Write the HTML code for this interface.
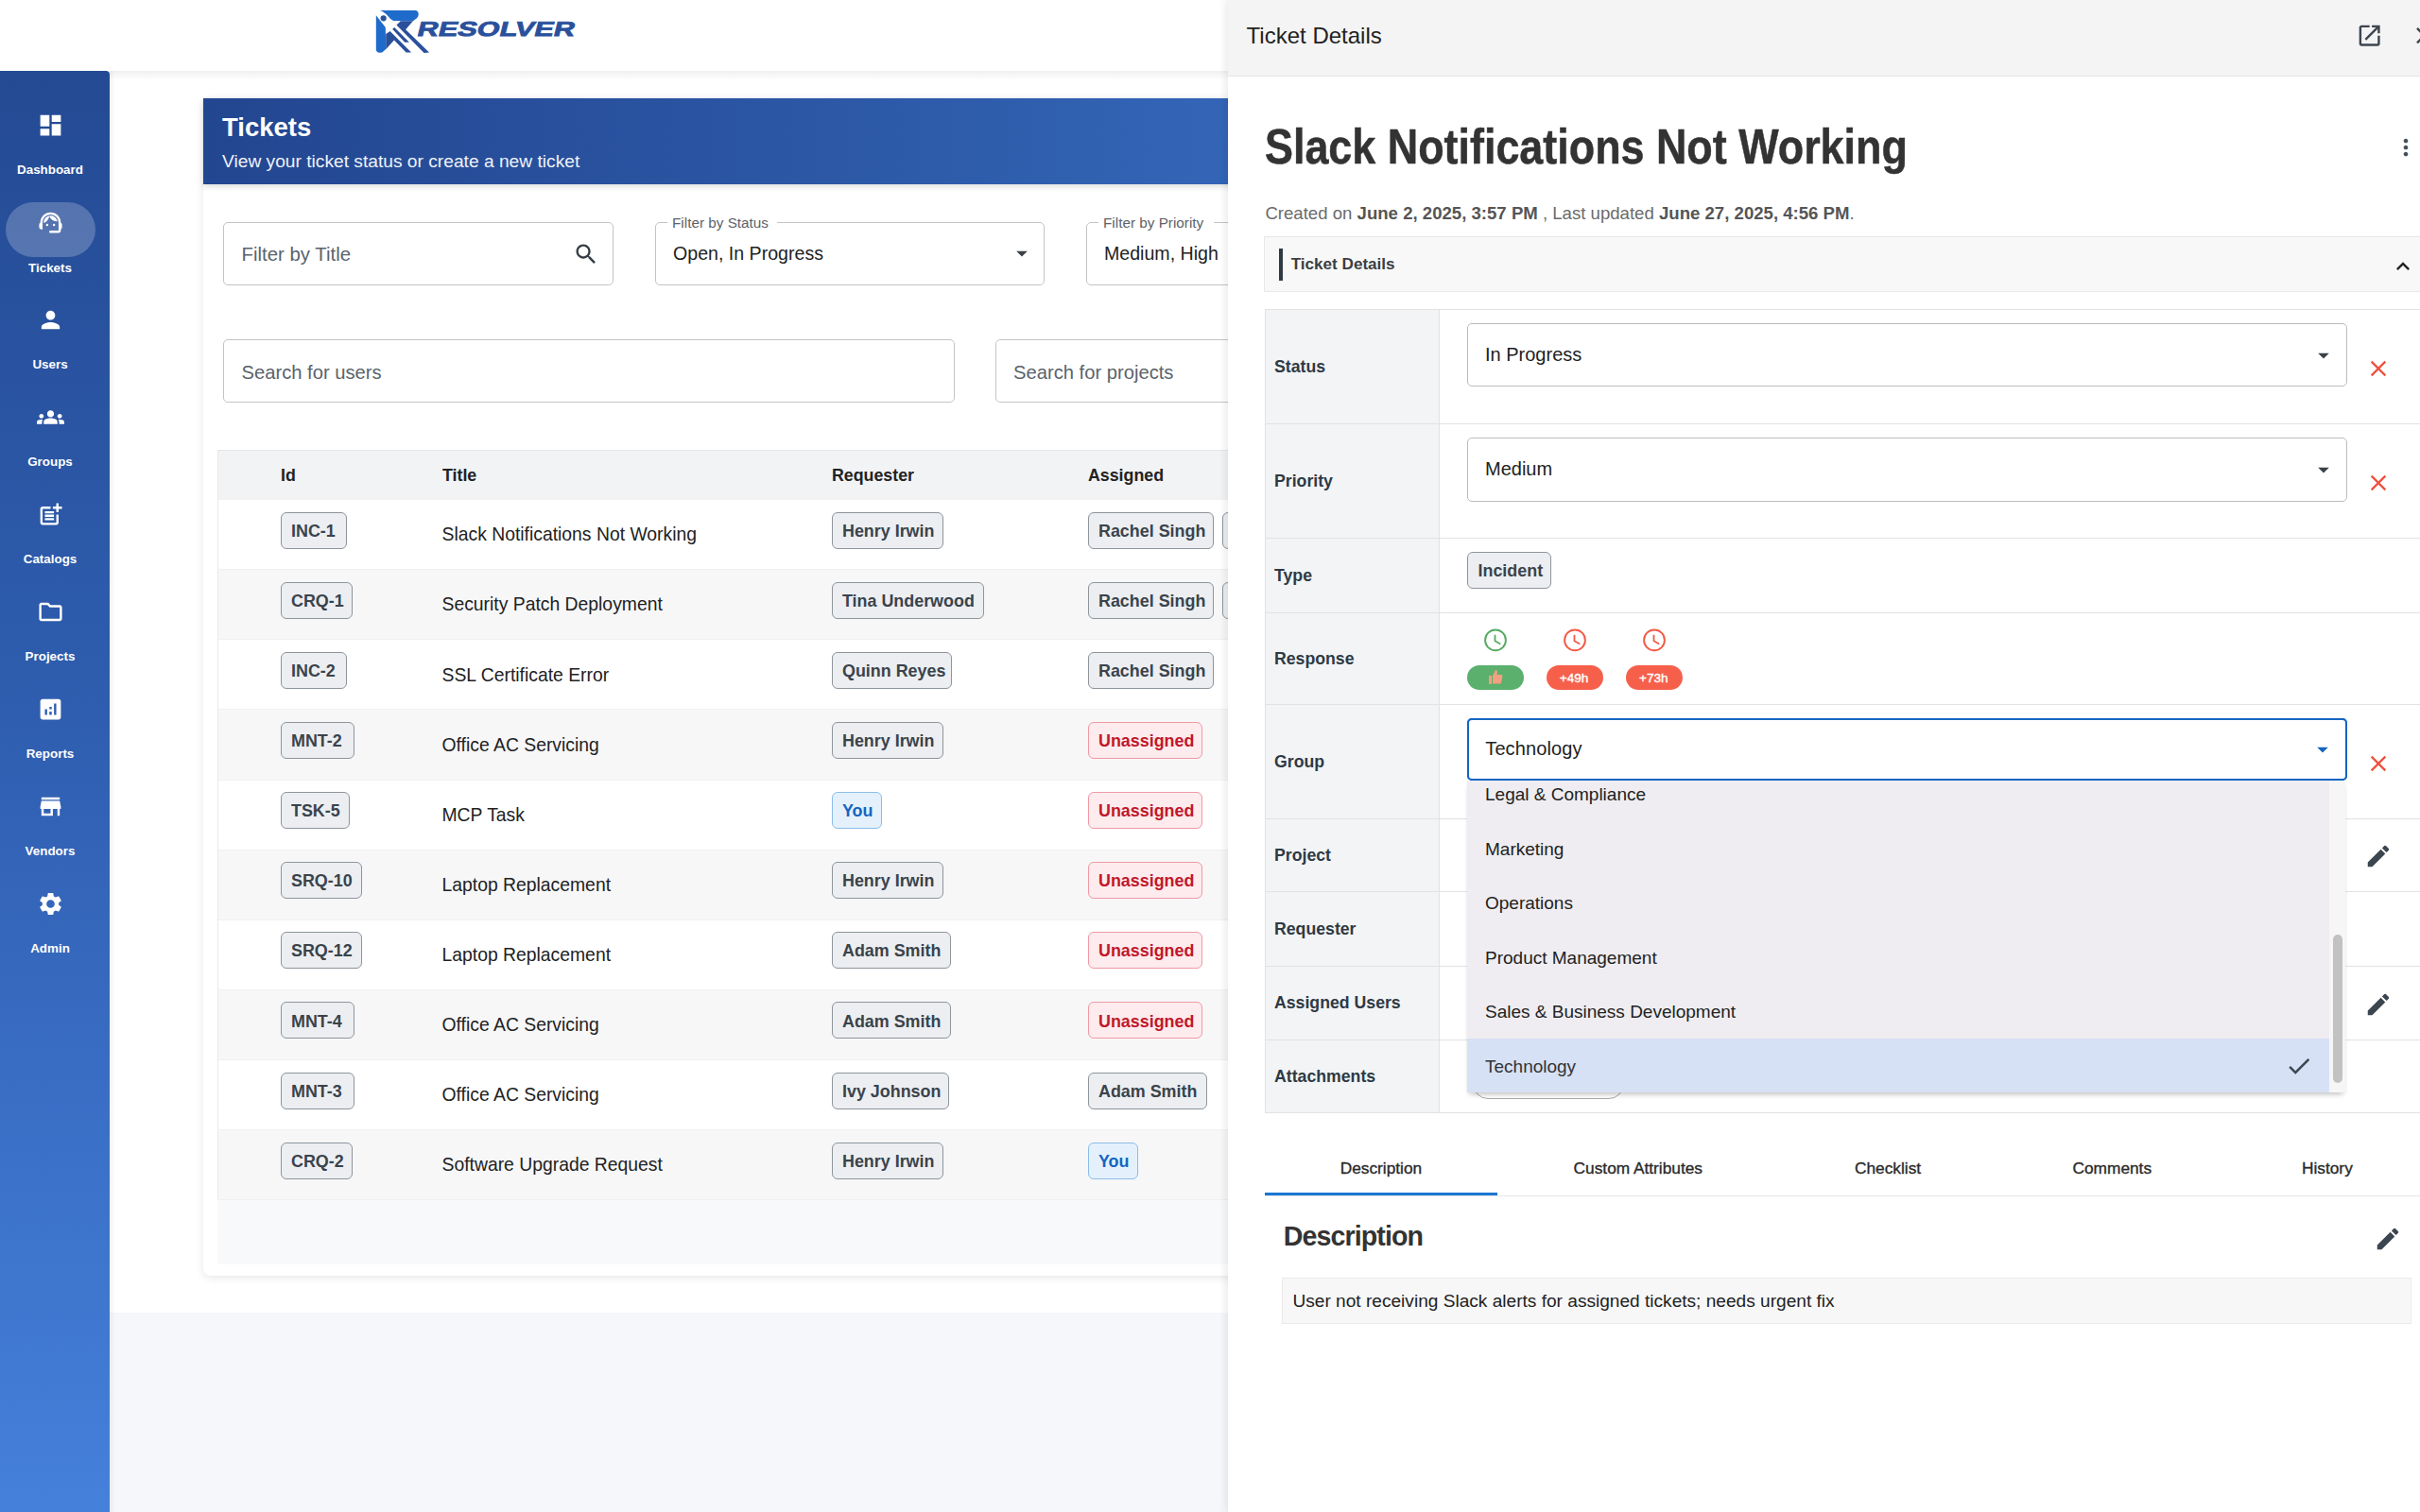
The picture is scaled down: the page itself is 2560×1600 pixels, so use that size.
<!DOCTYPE html><html><head><meta charset="utf-8"><style>
html,body{margin:0;padding:0;width:2560px;height:1600px;overflow:hidden;background:#fff;font-family:"Liberation Sans",sans-serif;}
.t{position:absolute;white-space:nowrap;line-height:1;}
.b{position:absolute;box-sizing:border-box;}
.i{position:absolute;}
</style></head><body>
<div class="b" style="left:116.0px;top:1389.0px;width:1200.0px;height:211.0px;background:#f6f7fa;"></div>
<div class="b" style="left:116.0px;top:75.0px;width:1200.0px;height:10.0px;background:linear-gradient(#f0f0f2,#fff);"></div>
<svg class="i" style="left:390px;top:5px;width:70px;height:55px" viewBox="0 0 1924 1512">
<path fill="#1f6bcb" d="M320 165 L1350 165 Q1450 165 1450 290 Q1450 340 1400 390 L1290 475 L720 470 Q640 440 560 330 Q450 200 320 165 Z"/>
<path fill="#2a509c" d="M810 590 L930 475 L1290 475 L1075 720 L1760 1390 L1610 1400 Z"/>
<path fill="#1f6bcb" d="M215 310 L490 660 L500 1290 L400 1380 Q300 1420 240 1370 Q215 1340 215 1300 Z"/>
<path fill="#2a509c" d="M500 850 L620 770 L1240 1390 L1090 1390 L740 1030 L500 1300 Z"/>
<path fill="#2a509c" d="M690 710 L750 660 L1180 1090 L1050 1090 Z"/>
<circle cx="430" cy="395" r="85" fill="#2a509c"/>
</svg>
<div class="t" style="left:441.2px;top:20.3px;font-size:21.6px;font-weight:700;color:#2a509c;transform:skewX(-14deg) scaleX(1.42);transform-origin:0 15px;-webkit-text-stroke:0.8px #2a509c">RESOLVER</div>
<div class="b" style="left:0.0px;top:75.0px;width:116.0px;height:1525.0px;background:linear-gradient(180deg,#244a93 0%,#2f5eb0 45%,#4580db 100%);border-top-right-radius:4px;"></div>
<div class="b" style="left:116.0px;top:75.0px;width:6.0px;height:1525.0px;background:linear-gradient(90deg,rgba(0,0,0,0.05),rgba(0,0,0,0));"></div>
<div class="b" style="left:6.0px;top:214.0px;width:95.0px;height:58.0px;background:rgba(255,255,255,0.22);border-radius:29px;"></div>
<svg class="i" style="left:38.8px;top:117.5px;width:29.0px;height:29.0px;" viewBox="0 0 24 24"><path fill="#fff" d="M3 13h8V3H3v10zm0 8h8v-6H3v6zm10 0h8V11h-8v10zm0-18v6h8V3h-8z"/></svg>
<div class="t" style="left:0;width:106px;text-align:center;top:173.1px;font-size:13.4px;font-weight:700;color:#fff">Dashboard</div>
<svg class="i" style="left:38.8px;top:221.2px;width:29.0px;height:29.0px;" viewBox="0 0 24 24"><path fill="#fff" d="M21 12.22C21 6.73 16.74 3 12 3c-4.69 0-9 3.65-9 9.28-.6.34-1 .98-1 1.72v2c0 1.1.9 2 2 2h1v-6.1c0-3.87 3.13-7 7-7s7 3.13 7 7V19h-8v2h8c1.1 0 2-.9 2-2v-1.22c.59-.31 1-.92 1-1.64v-2.3c0-.7-.41-1.31-1-1.62zM9 13a1 1 0 1 0 0 2a1 1 0 1 0 0-2zM15 13a1 1 0 1 0 0 2a1 1 0 1 0 0-2zM18 11.030C17.52 8.18 15.04 6 12.05 6c-3.03 0-6.29 2.51-6.03 6.45 2.47-1.01 4.33-3.21 4.86-5.890 1.31 2.63 4 4.44 7.12 4.47z"/></svg>
<div class="t" style="left:0;width:106px;text-align:center;top:276.5px;font-size:13.4px;font-weight:700;color:#fff">Tickets</div>
<svg class="i" style="left:38.8px;top:323.5px;width:29.0px;height:29.0px;" viewBox="0 0 24 24"><path fill="#fff" d="M12 12c2.21 0 4-1.79 4-4s-1.79-4-4-4-4 1.79-4 4 1.79 4 4 4zm0 2c-2.67 0-8 1.34-8 4v2h16v-2c0-2.66-5.33-4-8-4z"/></svg>
<div class="t" style="left:0;width:106px;text-align:center;top:379.1px;font-size:13.4px;font-weight:700;color:#fff">Users</div>
<svg class="i" style="left:38.8px;top:426.5px;width:29.0px;height:29.0px;" viewBox="0 0 24 24"><path fill="#fff" d="M12 12.75c1.63 0 3.07.39 4.24.9 1.08.48 1.76 1.56 1.76 2.73V18H6v-1.61c0-1.18.68-2.26 1.760-2.73 1.17-.52 2.61-.91 4.24-.91zM4 13c1.1 0 2-.9 2-2s-.9-2-2-2-2 .9-2 2 .9 2 2 2zm1.13 1.1c-.37-.06-.74-.1-1.13-.1-.99 0-1.93.21-2.78.58C.48 14.9 0 15.62 0 16.43V18h4.5v-1.61c0-.83.23-1.61.63-2.29zM20 13c1.1 0 2-.9 2-2s-.9-2-2-2-2 .9-2 2 .9 2 2 2zm4 3.43c0-.81-.48-1.53-1.22-1.85-.85-.37-1.79-.58-2.78-.58-.39 0-.76.04-1.130.1.4.68.63 1.46.63 2.29V18H24v-1.57zM12 6c1.66 0 3 1.34 3 3s-1.34 3-3 3-3-1.34-3-3 1.34-3 3-3z"/></svg>
<div class="t" style="left:0;width:106px;text-align:center;top:482.1px;font-size:13.4px;font-weight:700;color:#fff">Groups</div>
<svg class="i" style="left:38.8px;top:529.5px;width:29.0px;height:29.0px;" viewBox="0 0 24 24"><path fill="#fff" d="M17 19.22H5V7h7V5H5c-1.1 0-2 .9-2 2v12c0 1.1.9 2 2 2h12c1.1 0 2-.9 2-2v-7h-2v7.22zM19 2h-2v3h-3c.01.01 0 2 0 2h3v2.99c.01.01 2 0 2 0V7h3V5h-3V2zM7 9h8v2H7zm0 3v2h8v-2h-3zm0 3h8v2H7z"/></svg>
<div class="t" style="left:0;width:106px;text-align:center;top:585.1px;font-size:13.4px;font-weight:700;color:#fff">Catalogs</div>
<svg class="i" style="left:38.8px;top:632.5px;width:29.0px;height:29.0px;" viewBox="0 0 24 24"><path fill="#fff" d="M9.17 6l2 2H20v10H4V6h5.17M10 4H4c-1.1 0-1.99.9-1.99 2L2 18c0 1.1.9 2 2 2h16c1.1 0 2-.9 2-2V8c0-1.1-.9-2-2-2h-8l-2-2z"/></svg>
<div class="t" style="left:0;width:106px;text-align:center;top:688.1px;font-size:13.4px;font-weight:700;color:#fff">Projects</div>
<svg class="i" style="left:38.8px;top:735.5px;width:29.0px;height:29.0px;" viewBox="0 0 24 24"><path fill="#fff" d="M19 3H5c-1.1 0-2 .9-2 2v14c0 1.1.9 2 2 2h14c1.1 0 2-.9 2-2V5c0-1.1-.9-2-2-2zM9 17H7v-5h2v5zm4 0h-2v-3h2v3zm0-5h-2v-2h2v2zm4 5h-2V7h2v10z"/></svg>
<div class="t" style="left:0;width:106px;text-align:center;top:791.1px;font-size:13.4px;font-weight:700;color:#fff">Reports</div>
<svg class="i" style="left:38.8px;top:838.5px;width:29.0px;height:29.0px;" viewBox="0 0 24 24"><path fill="#fff" d="M20 4H4v2h16V4zm1 10v-2l-1-5H4l-1 5v2h1v6h10v-6h4v6h2v-6h1zm-9 4H6v-4h6v4z"/></svg>
<div class="t" style="left:0;width:106px;text-align:center;top:894.1px;font-size:13.4px;font-weight:700;color:#fff">Vendors</div>
<svg class="i" style="left:38.8px;top:941.5px;width:29.0px;height:29.0px;" viewBox="0 0 24 24"><path fill="#fff" d="M19.14 12.94c.04-.3.06-.61.06-.94 0-.32-.02-.64-.07-.94l2.03-1.58c.18-.14.23-.41.12-.61l-1.92-3.32c-.12-.22-.37-.29-.59-.22l-2.39.96c-.5-.38-1.03-.7-1.62-.94l-.36-2.54c-.04-.24-.24-.41-.48-.41h-3.84c-.24 0-.43.17-.47.41l-.36 2.540c-.59.24-1.13.57-1.62.94l-2.39-.96c-.22-.08-.47 0-.59.22L2.74 8.87c-.12.21-.08.47.12.61l2.03 1.58c-.05.3-.09.63-.09.94s.02.64.07.94l-2.03 1.58c-.18.14-.23.41-.12.61l1.92 3.32c.12.22.37.29.59.22l2.39-.96c.5.38 1.03.7 1.62.94l.36 2.54c.05.24.24.41.48.41h3.84c.24 0 .44-.17.47-.41l.36-2.54c.59-.24 1.13-.56 1.62-.94l2.39.96c.22.08.47 0 .59-.22l1.92-3.32c.12-.22.07-.47-.12-.61l-2.01-1.58zM12 15.6c-1.98 0-3.6-1.62-3.6-3.6s1.62-3.6 3.6-3.6 3.6 1.62 3.6 3.6-1.62 3.6-3.6 3.6z"/></svg>
<div class="t" style="left:0;width:106px;text-align:center;top:997.1px;font-size:13.4px;font-weight:700;color:#fff">Admin</div>
<div class="b" style="left:215.0px;top:104.0px;width:1120.0px;height:1246.0px;background:#fff;border-radius:8px;box-shadow:0 2px 10px rgba(0,0,0,0.10);"></div>
<div class="b" style="left:215.0px;top:104.0px;width:1120.0px;height:91.0px;background:linear-gradient(90deg,#234690 0%,#2c58a6 60%,#3466b8 100%);box-shadow:0 3px 6px rgba(0,0,0,0.12);"></div>
<div class="t " style="left:235.0px;top:120.9px;font-size:27.5px;color:#fff;font-weight:700;">Tickets</div>
<div class="t " style="left:235.0px;top:161.2px;font-size:19.2px;color:#eef2fa;font-weight:400;">View your ticket status or create a new ticket</div>
<div class="b" style="left:236.0px;top:235.4px;width:413.0px;height:67.0px;border:1px solid #c4c4c4;border-radius:5px;background:#fff;"></div>
<div class="t " style="left:255.5px;top:258.5px;font-size:20.4px;color:#5a636b;font-weight:400;">Filter by Title</div>
<svg class="i" style="left:606.4px;top:254.5px;width:28.0px;height:28.0px;" viewBox="0 0 24 24"><path fill="#333c44" d="M15.5 14h-.79l-.28-.27C15.41 12.59 16 11.11 16 9.5 16 5.91 13.09 3 9.5 3S3 5.91 3 9.5 5.91 16 9.5 16c1.61 0 3.09-.59 4.23-1.57l.27.28v.79l5 4.99L20.49 19l-4.99-5zm-6 0C7.01 14 5 11.99 5 9.5S7.01 5 9.5 5 14 7.01 14 9.5 11.99 14 9.5 14z"/></svg>
<div class="b" style="left:693.0px;top:235.4px;width:412.0px;height:67.0px;border:1px solid #c4c4c4;border-radius:5px;background:#fff;"></div>
<div class="b" style="left:706.0px;top:228.0px;width:116.0px;height:14.0px;background:#fff;"></div>
<div class="t " style="left:711.0px;top:228.0px;font-size:15.3px;color:#5e6369;font-weight:400;">Filter by Status</div>
<div class="t " style="left:712.0px;top:259.4px;font-size:19.6px;color:#222;font-weight:400;">Open, In Progress</div>
<svg class="i" style="left:1067.0px;top:254.0px;width:28.0px;height:28.0px;" viewBox="0 0 24 24"><path fill="#3a4148" d="M7 10l5 5 5-5z"/></svg>
<div class="b" style="left:1149.0px;top:235.4px;width:412.0px;height:67.0px;border:1px solid #c4c4c4;border-radius:5px;background:#fff;"></div>
<div class="b" style="left:1162.0px;top:228.0px;width:122.0px;height:14.0px;background:#fff;"></div>
<div class="t " style="left:1167.0px;top:228.0px;font-size:15.3px;color:#5e6369;font-weight:400;">Filter by Priority</div>
<div class="t " style="left:1168.0px;top:259.4px;font-size:19.6px;color:#222;font-weight:400;">Medium, High</div>
<div class="b" style="left:236.0px;top:359.0px;width:773.5px;height:67.0px;border:1px solid #c4c4c4;border-radius:5px;background:#fff;"></div>
<div class="t " style="left:255.5px;top:383.7px;font-size:20.2px;color:#5a636b;font-weight:400;">Search for users</div>
<div class="b" style="left:1053.0px;top:359.0px;width:500.0px;height:67.0px;border:1px solid #c4c4c4;border-radius:5px;background:#fff;"></div>
<div class="t " style="left:1072.0px;top:383.7px;font-size:20.2px;color:#5a636b;font-weight:400;">Search for projects</div>
<div class="b" style="left:230.0px;top:476.5px;width:1100.0px;height:861.0px;background:#f8f9fb;"></div>
<div class="b" style="left:230.0px;top:476.2px;width:1100.0px;height:52.0px;background:#f2f3f5;border-top:1px solid #e6e6e6;"></div>
<div class="t " style="left:297.0px;top:494.9px;font-size:17.8px;color:#222;font-weight:700;">Id</div>
<div class="t " style="left:468.0px;top:494.9px;font-size:17.8px;color:#222;font-weight:700;">Title</div>
<div class="t " style="left:880.0px;top:494.9px;font-size:17.8px;color:#222;font-weight:700;">Requester</div>
<div class="t " style="left:1151.0px;top:494.9px;font-size:17.8px;color:#222;font-weight:700;">Assigned</div>
<div class="b" style="left:230.0px;top:528.0px;width:1100.0px;height:74.0px;background:#ffffff;border-top:1px solid #f0f0f2;"></div>
<div class="b" style="left:296.5px;top:541.5px;width:70px;height:39px;border-radius:6px;background:#eceef1;border:1.5px solid #8e959b;color:#3a434b;"></div>
<div class="t " style="left:308.0px;top:553.6px;font-size:17.9px;color:#3a434b;font-weight:700;">INC-1</div>
<div class="t " style="left:467.5px;top:556.2px;font-size:19.35px;color:#222;font-weight:400;">Slack Notifications Not Working</div>
<div class="b" style="left:879.5px;top:541.5px;width:118px;height:39px;border-radius:6px;background:#eceef1;border:1.5px solid #8e959b;color:#3a434b;"></div>
<div class="t " style="left:891.0px;top:553.6px;font-size:17.9px;color:#3a434b;font-weight:700;">Henry Irwin</div>
<div class="b" style="left:1150.5px;top:541.5px;width:133px;height:39px;border-radius:6px;background:#eceef1;border:1.5px solid #8e959b;color:#3a434b;"></div>
<div class="t " style="left:1162.0px;top:553.6px;font-size:17.9px;color:#3a434b;font-weight:700;">Rachel Singh</div>
<div class="b" style="left:1292.6px;top:541.5px;width:40px;height:39px;border-radius:6px;background:#eceef1;border:1.5px solid #8e959b;"></div>
<div class="b" style="left:230.0px;top:602.1px;width:1100.0px;height:74.0px;background:#f7f7f8;border-top:1px solid #f0f0f2;"></div>
<div class="b" style="left:296.5px;top:615.63px;width:76px;height:39px;border-radius:6px;background:#eceef1;border:1.5px solid #8e959b;color:#3a434b;"></div>
<div class="t " style="left:308.0px;top:627.8px;font-size:17.9px;color:#3a434b;font-weight:700;">CRQ-1</div>
<div class="t " style="left:467.5px;top:630.4px;font-size:19.35px;color:#222;font-weight:400;">Security Patch Deployment</div>
<div class="b" style="left:879.5px;top:615.63px;width:161px;height:39px;border-radius:6px;background:#eceef1;border:1.5px solid #8e959b;color:#3a434b;"></div>
<div class="t " style="left:891.0px;top:627.8px;font-size:17.9px;color:#3a434b;font-weight:700;">Tina Underwood</div>
<div class="b" style="left:1150.5px;top:615.63px;width:133px;height:39px;border-radius:6px;background:#eceef1;border:1.5px solid #8e959b;color:#3a434b;"></div>
<div class="t " style="left:1162.0px;top:627.8px;font-size:17.9px;color:#3a434b;font-weight:700;">Rachel Singh</div>
<div class="b" style="left:1292.6px;top:615.63px;width:40px;height:39px;border-radius:6px;background:#eceef1;border:1.5px solid #8e959b;"></div>
<div class="b" style="left:230.0px;top:676.3px;width:1100.0px;height:74.0px;background:#ffffff;border-top:1px solid #f0f0f2;"></div>
<div class="b" style="left:296.5px;top:689.76px;width:70px;height:39px;border-radius:6px;background:#eceef1;border:1.5px solid #8e959b;color:#3a434b;"></div>
<div class="t " style="left:308.0px;top:701.9px;font-size:17.9px;color:#3a434b;font-weight:700;">INC-2</div>
<div class="t " style="left:467.5px;top:704.5px;font-size:19.35px;color:#222;font-weight:400;">SSL Certificate Error</div>
<div class="b" style="left:879.5px;top:689.76px;width:127px;height:39px;border-radius:6px;background:#eceef1;border:1.5px solid #8e959b;color:#3a434b;"></div>
<div class="t " style="left:891.0px;top:701.9px;font-size:17.9px;color:#3a434b;font-weight:700;">Quinn Reyes</div>
<div class="b" style="left:1150.5px;top:689.76px;width:133px;height:39px;border-radius:6px;background:#eceef1;border:1.5px solid #8e959b;color:#3a434b;"></div>
<div class="t " style="left:1162.0px;top:701.9px;font-size:17.9px;color:#3a434b;font-weight:700;">Rachel Singh</div>
<div class="b" style="left:230.0px;top:750.4px;width:1100.0px;height:74.0px;background:#f7f7f8;border-top:1px solid #f0f0f2;"></div>
<div class="b" style="left:296.5px;top:763.89px;width:78px;height:39px;border-radius:6px;background:#eceef1;border:1.5px solid #8e959b;color:#3a434b;"></div>
<div class="t " style="left:308.0px;top:776.0px;font-size:17.9px;color:#3a434b;font-weight:700;">MNT-2</div>
<div class="t " style="left:467.5px;top:778.6px;font-size:19.35px;color:#222;font-weight:400;">Office AC Servicing</div>
<div class="b" style="left:879.5px;top:763.89px;width:118px;height:39px;border-radius:6px;background:#eceef1;border:1.5px solid #8e959b;color:#3a434b;"></div>
<div class="t " style="left:891.0px;top:776.0px;font-size:17.9px;color:#3a434b;font-weight:700;">Henry Irwin</div>
<div class="b" style="left:1150.5px;top:763.89px;width:121px;height:39px;border-radius:6px;background:#fdebee;border:1.5px solid #ef9aa4;color:#c0182b;"></div>
<div class="t " style="left:1162.0px;top:776.0px;font-size:17.9px;color:#c0182b;font-weight:700;">Unassigned</div>
<div class="b" style="left:230.0px;top:824.5px;width:1100.0px;height:74.0px;background:#ffffff;border-top:1px solid #f0f0f2;"></div>
<div class="b" style="left:296.5px;top:838.02px;width:73px;height:39px;border-radius:6px;background:#eceef1;border:1.5px solid #8e959b;color:#3a434b;"></div>
<div class="t " style="left:308.0px;top:850.2px;font-size:17.9px;color:#3a434b;font-weight:700;">TSK-5</div>
<div class="t " style="left:467.5px;top:852.7px;font-size:19.35px;color:#222;font-weight:400;">MCP Task</div>
<div class="b" style="left:879.5px;top:838.02px;width:53px;height:39px;border-radius:6px;background:#e4f1fd;border:1.5px solid #8cbde9;color:#1565c0;"></div>
<div class="t " style="left:891.0px;top:850.2px;font-size:17.9px;color:#1565c0;font-weight:700;">You</div>
<div class="b" style="left:1150.5px;top:838.02px;width:121px;height:39px;border-radius:6px;background:#fdebee;border:1.5px solid #ef9aa4;color:#c0182b;"></div>
<div class="t " style="left:1162.0px;top:850.2px;font-size:17.9px;color:#c0182b;font-weight:700;">Unassigned</div>
<div class="b" style="left:230.0px;top:898.6px;width:1100.0px;height:74.0px;background:#f7f7f8;border-top:1px solid #f0f0f2;"></div>
<div class="b" style="left:296.5px;top:912.15px;width:86px;height:39px;border-radius:6px;background:#eceef1;border:1.5px solid #8e959b;color:#3a434b;"></div>
<div class="t " style="left:308.0px;top:924.3px;font-size:17.9px;color:#3a434b;font-weight:700;">SRQ-10</div>
<div class="t " style="left:467.5px;top:926.9px;font-size:19.35px;color:#222;font-weight:400;">Laptop Replacement</div>
<div class="b" style="left:879.5px;top:912.15px;width:118px;height:39px;border-radius:6px;background:#eceef1;border:1.5px solid #8e959b;color:#3a434b;"></div>
<div class="t " style="left:891.0px;top:924.3px;font-size:17.9px;color:#3a434b;font-weight:700;">Henry Irwin</div>
<div class="b" style="left:1150.5px;top:912.15px;width:121px;height:39px;border-radius:6px;background:#fdebee;border:1.5px solid #ef9aa4;color:#c0182b;"></div>
<div class="t " style="left:1162.0px;top:924.3px;font-size:17.9px;color:#c0182b;font-weight:700;">Unassigned</div>
<div class="b" style="left:230.0px;top:972.8px;width:1100.0px;height:74.0px;background:#ffffff;border-top:1px solid #f0f0f2;"></div>
<div class="b" style="left:296.5px;top:986.28px;width:86px;height:39px;border-radius:6px;background:#eceef1;border:1.5px solid #8e959b;color:#3a434b;"></div>
<div class="t " style="left:308.0px;top:998.4px;font-size:17.9px;color:#3a434b;font-weight:700;">SRQ-12</div>
<div class="t " style="left:467.5px;top:1001.0px;font-size:19.35px;color:#222;font-weight:400;">Laptop Replacement</div>
<div class="b" style="left:879.5px;top:986.28px;width:126px;height:39px;border-radius:6px;background:#eceef1;border:1.5px solid #8e959b;color:#3a434b;"></div>
<div class="t " style="left:891.0px;top:998.4px;font-size:17.9px;color:#3a434b;font-weight:700;">Adam Smith</div>
<div class="b" style="left:1150.5px;top:986.28px;width:121px;height:39px;border-radius:6px;background:#fdebee;border:1.5px solid #ef9aa4;color:#c0182b;"></div>
<div class="t " style="left:1162.0px;top:998.4px;font-size:17.9px;color:#c0182b;font-weight:700;">Unassigned</div>
<div class="b" style="left:230.0px;top:1046.9px;width:1100.0px;height:74.0px;background:#f7f7f8;border-top:1px solid #f0f0f2;"></div>
<div class="b" style="left:296.5px;top:1060.4099999999999px;width:78px;height:39px;border-radius:6px;background:#eceef1;border:1.5px solid #8e959b;color:#3a434b;"></div>
<div class="t " style="left:308.0px;top:1072.6px;font-size:17.9px;color:#3a434b;font-weight:700;">MNT-4</div>
<div class="t " style="left:467.5px;top:1075.1px;font-size:19.35px;color:#222;font-weight:400;">Office AC Servicing</div>
<div class="b" style="left:879.5px;top:1060.4099999999999px;width:126px;height:39px;border-radius:6px;background:#eceef1;border:1.5px solid #8e959b;color:#3a434b;"></div>
<div class="t " style="left:891.0px;top:1072.6px;font-size:17.9px;color:#3a434b;font-weight:700;">Adam Smith</div>
<div class="b" style="left:1150.5px;top:1060.4099999999999px;width:121px;height:39px;border-radius:6px;background:#fdebee;border:1.5px solid #ef9aa4;color:#c0182b;"></div>
<div class="t " style="left:1162.0px;top:1072.6px;font-size:17.9px;color:#c0182b;font-weight:700;">Unassigned</div>
<div class="b" style="left:230.0px;top:1121.0px;width:1100.0px;height:74.0px;background:#ffffff;border-top:1px solid #f0f0f2;"></div>
<div class="b" style="left:296.5px;top:1134.54px;width:78px;height:39px;border-radius:6px;background:#eceef1;border:1.5px solid #8e959b;color:#3a434b;"></div>
<div class="t " style="left:308.0px;top:1146.7px;font-size:17.9px;color:#3a434b;font-weight:700;">MNT-3</div>
<div class="t " style="left:467.5px;top:1149.3px;font-size:19.35px;color:#222;font-weight:400;">Office AC Servicing</div>
<div class="b" style="left:879.5px;top:1134.54px;width:124px;height:39px;border-radius:6px;background:#eceef1;border:1.5px solid #8e959b;color:#3a434b;"></div>
<div class="t " style="left:891.0px;top:1146.7px;font-size:17.9px;color:#3a434b;font-weight:700;">Ivy Johnson</div>
<div class="b" style="left:1150.5px;top:1134.54px;width:126px;height:39px;border-radius:6px;background:#eceef1;border:1.5px solid #8e959b;color:#3a434b;"></div>
<div class="t " style="left:1162.0px;top:1146.7px;font-size:17.9px;color:#3a434b;font-weight:700;">Adam Smith</div>
<div class="b" style="left:230.0px;top:1195.2px;width:1100.0px;height:74.0px;background:#f7f7f8;border-top:1px solid #f0f0f2;"></div>
<div class="b" style="left:296.5px;top:1208.67px;width:76px;height:39px;border-radius:6px;background:#eceef1;border:1.5px solid #8e959b;color:#3a434b;"></div>
<div class="t " style="left:308.0px;top:1220.8px;font-size:17.9px;color:#3a434b;font-weight:700;">CRQ-2</div>
<div class="t " style="left:467.5px;top:1223.4px;font-size:19.35px;color:#222;font-weight:400;">Software Upgrade Request</div>
<div class="b" style="left:879.5px;top:1208.67px;width:118px;height:39px;border-radius:6px;background:#eceef1;border:1.5px solid #8e959b;color:#3a434b;"></div>
<div class="t " style="left:891.0px;top:1220.8px;font-size:17.9px;color:#3a434b;font-weight:700;">Henry Irwin</div>
<div class="b" style="left:1150.5px;top:1208.67px;width:53px;height:39px;border-radius:6px;background:#e4f1fd;border:1.5px solid #8cbde9;color:#1565c0;"></div>
<div class="t " style="left:1162.0px;top:1220.8px;font-size:17.9px;color:#1565c0;font-weight:700;">You</div>
<div class="b" style="left:230.0px;top:1269.0px;width:1100.0px;height:68.0px;background:#f8f9fb;border-top:1px solid #eeeff1;"></div>
<div class="b" style="left:230.0px;top:476.2px;width:1.0px;height:793.0px;background:#e9e9ec;"></div>
<div class="b" id="panel" style="left:1299px;top:0;width:1261px;height:1600px;background:#fff;box-shadow:-3px 0 8px rgba(0,0,0,0.08);overflow:hidden">
</div>
<div class="b" style="left:1299.0px;top:0.0px;width:1261.0px;height:81.0px;background:#f4f4f4;border-bottom:1px solid #e4e4e4;"></div>
<div class="t " style="left:1318.6px;top:26.2px;font-size:24px;color:#222;font-weight:400;">Ticket Details</div>
<svg class="i" style="left:2492.3px;top:23.3px;width:29.3px;height:29.3px;" viewBox="0 0 24 24"><path fill="#3c4650" d="M19 19H5V5h7V3H5c-1.11 0-2 .9-2 2v14c0 1.1.89 2 2 2h14c1.1 0 2-.9 2-2v-7h-2v7zM14 3v2h3.59l-9.83 9.83 1.41 1.41L19 6.41V10h2V3h-7z"/></svg>
<svg class="i" style="left:2550.0px;top:23.3px;width:29.3px;height:29.3px;" viewBox="0 0 24 24"><path fill="#3c4650" d="M19 6.41L17.59 5 12 10.59 6.41 5 5 6.41 10.59 12 5 17.59 6.41 19 12 13.41 17.59 19 19 17.59 13.41 12z"/></svg>
<div class="t " style="left:1338.4px;top:128.5px;font-size:52px;color:#333;font-weight:700;transform:scaleX(0.863);transform-origin:left;-webkit-text-stroke:0.5px #333;">Slack Notifications Not Working</div>
<svg class="i" style="left:2531.4px;top:142.0px;width:28.0px;height:28.0px;" viewBox="0 0 24 24"><path fill="#46505a" d="M12 8c1.1 0 2-.9 2-2s-.9-2-2-2-2 .9-2 2 .9 2 2 2zm0 2c-1.1 0-2 .9-2 2s.9 2 2 2 2-.9 2-2-.9-2-2-2zm0 6c-1.1 0-2 .9-2 2s.9 2 2 2 2-.9 2-2-.9-2-2-2z"/></svg>
<div class="t " style="left:1338.4px;top:217.2px;font-size:18.6px;color:#6b6b6b;font-weight:400;">Created on <b style="color:#555">June 2, 2025, 3:57 PM</b> , Last updated <b style="color:#555">June 27, 2025, 4:56 PM</b>.</div>
<div class="b" style="left:1337.3px;top:250.4px;width:1260.0px;height:59.0px;background:#f8f8f8;border:1px solid #e8e8e8;"></div>
<div class="b" style="left:1353.0px;top:263.0px;width:3.5px;height:34.0px;background:#2f3a42;"></div>
<div class="t " style="left:1365.7px;top:271.2px;font-size:17.1px;color:#3a3f44;font-weight:700;">Ticket Details</div>
<svg class="i" style="left:2528.4px;top:267.5px;width:28.0px;height:28.0px;" viewBox="0 0 24 24"><path fill="#222" d="M12 8l-6 6 1.41 1.41L12 10.83l4.59 4.58L18 14z"/></svg>
<div class="b" style="left:1338.0px;top:327.4px;width:1260.0px;height:850.6px;border:1px solid #e2e2e2;background:#fff;"></div>
<div class="b" style="left:1338.0px;top:327.4px;width:185.0px;height:850.6px;background:#f3f4f6;border:1px solid #e2e2e2;"></div>
<div class="b" style="left:1338.0px;top:327.4px;width:1260.0px;height:1.0px;background:#e2e2e2;"></div>
<div class="t " style="left:1348.0px;top:379.7px;font-size:17.7px;color:#2e3a44;font-weight:700;">Status</div>
<div class="b" style="left:1338.0px;top:448.0px;width:1260.0px;height:1.0px;background:#e2e2e2;"></div>
<div class="t " style="left:1348.0px;top:500.5px;font-size:17.7px;color:#2e3a44;font-weight:700;">Priority</div>
<div class="b" style="left:1338.0px;top:569.0px;width:1260.0px;height:1.0px;background:#e2e2e2;"></div>
<div class="t " style="left:1348.0px;top:600.5px;font-size:17.7px;color:#2e3a44;font-weight:700;">Type</div>
<div class="b" style="left:1338.0px;top:648.0px;width:1260.0px;height:1.0px;background:#e2e2e2;"></div>
<div class="t " style="left:1348.0px;top:688.5px;font-size:17.7px;color:#2e3a44;font-weight:700;">Response</div>
<div class="b" style="left:1338.0px;top:745.0px;width:1260.0px;height:1.0px;background:#e2e2e2;"></div>
<div class="t " style="left:1348.0px;top:797.5px;font-size:17.7px;color:#2e3a44;font-weight:700;">Group</div>
<div class="b" style="left:1338.0px;top:866.0px;width:1260.0px;height:1.0px;background:#e2e2e2;"></div>
<div class="t " style="left:1348.0px;top:896.5px;font-size:17.7px;color:#2e3a44;font-weight:700;">Project</div>
<div class="b" style="left:1338.0px;top:943.0px;width:1260.0px;height:1.0px;background:#e2e2e2;"></div>
<div class="t " style="left:1348.0px;top:974.5px;font-size:17.7px;color:#2e3a44;font-weight:700;">Requester</div>
<div class="b" style="left:1338.0px;top:1022.0px;width:1260.0px;height:1.0px;background:#e2e2e2;"></div>
<div class="t " style="left:1348.0px;top:1053.0px;font-size:17.7px;color:#2e3a44;font-weight:700;">Assigned Users</div>
<div class="b" style="left:1338.0px;top:1100.0px;width:1260.0px;height:1.0px;background:#e2e2e2;"></div>
<div class="t " style="left:1348.0px;top:1131.0px;font-size:17.7px;color:#2e3a44;font-weight:700;">Attachments</div>
<div class="b" style="left:1552.0px;top:341.9px;width:931.0px;height:67.5px;border:1px solid #b9bdc1;border-radius:5px;background:#fff;"></div>
<div class="t " style="left:1571.0px;top:364.5px;font-size:20px;color:#222;font-weight:400;">In Progress</div>
<svg class="i" style="left:2444.0px;top:361.5px;width:28.0px;height:28.0px;" viewBox="0 0 24 24"><path fill="#3a4148" d="M7 10l5 5 5-5z"/></svg>
<svg class="i" style="left:2502.0px;top:376.0px;width:28.0px;height:28.0px;" viewBox="0 0 24 24"><path fill="#f0523e" d="M19 6.41L17.59 5 12 10.59 6.41 5 5 6.41 10.59 12 5 17.59 6.41 19 12 13.41 17.59 19 19 17.59 13.41 12z"/></svg>
<div class="b" style="left:1552.0px;top:463.2px;width:931.0px;height:67.5px;border:1px solid #b9bdc1;border-radius:5px;background:#fff;"></div>
<div class="t " style="left:1571.0px;top:485.8px;font-size:20px;color:#222;font-weight:400;">Medium</div>
<svg class="i" style="left:2444.0px;top:482.8px;width:28.0px;height:28.0px;" viewBox="0 0 24 24"><path fill="#3a4148" d="M7 10l5 5 5-5z"/></svg>
<svg class="i" style="left:2502.0px;top:497.0px;width:28.0px;height:28.0px;" viewBox="0 0 24 24"><path fill="#f0523e" d="M19 6.41L17.59 5 12 10.59 6.41 5 5 6.41 10.59 12 5 17.59 6.41 19 12 13.41 17.59 19 19 17.59 13.41 12z"/></svg>
<div class="b" style="left:1552px;top:584px;width:89px;height:39px;border-radius:6px;background:#eceef1;border:1.5px solid #8e959b;color:#3a434b;"></div>
<div class="t " style="left:1563.5px;top:596.1px;font-size:17.9px;color:#3a434b;font-weight:700;">Incident</div>
<svg class="i" style="left:1568.9px;top:664px;width:26px;height:26px" viewBox="0 0 26 26"><circle cx="13" cy="13.4" r="10.9" fill="none" stroke="#55ab63" stroke-width="1.9"/><path d="M12.5 7.8V14.3L18.3 17.5" fill="none" stroke="#55ab63" stroke-width="1.8"/></svg>
<svg class="i" style="left:1652.6px;top:664px;width:26px;height:26px" viewBox="0 0 26 26"><circle cx="13" cy="13.4" r="10.9" fill="none" stroke="#f25a47" stroke-width="1.9"/><path d="M12.5 7.8V14.3L18.3 17.5" fill="none" stroke="#f25a47" stroke-width="1.8"/></svg>
<svg class="i" style="left:1736.5px;top:664px;width:26px;height:26px" viewBox="0 0 26 26"><circle cx="13" cy="13.4" r="10.9" fill="none" stroke="#f25a47" stroke-width="1.9"/><path d="M12.5 7.8V14.3L18.3 17.5" fill="none" stroke="#f25a47" stroke-width="1.8"/></svg>
<div class="b" style="left:1552.0px;top:704.0px;width:60.0px;height:26.0px;background:#5bb06d;border-radius:13px;"></div>
<svg class="i" style="left:1574px;top:708px;width:16px;height:17px" viewBox="0 0 16 17"><path fill="#f2a07f" d="M1 7h3v9H1z M5 7l3-6c1.2 0 2 .8 2 2l-.5 3H14c1 0 1.6.9 1.4 1.8l-1.3 6.5c-.2.8-.8 1.2-1.6 1.2H5z"/></svg>
<div class="b" style="left:1635.5px;top:704.0px;width:60.0px;height:26.0px;background:#f6604b;border-radius:13px;"></div>
<div class="t " style="left:1649.8px;top:711.0px;font-size:13.6px;color:#fff;font-weight:400;-webkit-text-stroke:0.4px #fff;">+49h</div>
<div class="b" style="left:1720.0px;top:704.0px;width:60.0px;height:26.0px;background:#f6604b;border-radius:13px;"></div>
<div class="t " style="left:1734.0px;top:711.0px;font-size:13.6px;color:#fff;font-weight:400;-webkit-text-stroke:0.4px #fff;">+73h</div>
<div class="b" style="left:1552.0px;top:759.8px;width:931.0px;height:66.7px;border:2.5px solid #1565c0;border-radius:5px;background:#fff;"></div>
<div class="t " style="left:1571.3px;top:782.2px;font-size:20px;color:#222;font-weight:400;letter-spacing:0.1px;">Technology</div>
<svg class="i" style="left:2443.0px;top:778.6px;width:28.0px;height:28.0px;" viewBox="0 0 24 24"><path fill="#1565c0" d="M7 10l5 5 5-5z"/></svg>
<svg class="i" style="left:2502.0px;top:793.5px;width:28.0px;height:28.0px;" viewBox="0 0 24 24"><path fill="#f0523e" d="M19 6.41L17.59 5 12 10.59 6.41 5 5 6.41 10.59 12 5 17.59 6.41 19 12 13.41 17.59 19 19 17.59 13.41 12z"/></svg>
<svg class="i" style="left:2500.6px;top:890.7px;width:30.0px;height:30.0px;" viewBox="0 0 24 24"><path fill="#3c4650" d="M3 17.25V21h3.75L17.81 9.94l-3.75-3.75L3 17.25zM20.71 7.04c.39-.39.39-1.02 0-1.41l-2.34-2.34a.9959.9959 0 0 0-1.41 0l-1.83 1.83 3.75 3.75 1.83-1.83z"/></svg>
<svg class="i" style="left:2500.6px;top:1048.0px;width:30.0px;height:30.0px;" viewBox="0 0 24 24"><path fill="#3c4650" d="M3 17.25V21h3.75L17.81 9.94l-3.75-3.75L3 17.25zM20.71 7.04c.39-.39.39-1.02 0-1.41l-2.34-2.34a.9959.9959 0 0 0-1.41 0l-1.83 1.83 3.75 3.75 1.83-1.83z"/></svg>
<div class="b" style="left:1558.0px;top:1131.0px;width:160.0px;height:32.0px;border:1.5px solid #aaa;border-radius:16px;"></div>
<div class="b" style="left:1552px;top:826px;width:929px;height:330px;background:#efedf1;box-shadow:0 5px 6px -3px rgba(0,0,0,0.2),0 2px 4px rgba(0,0,0,0.06);overflow:hidden">
</div>
<div class="b" style="left:1552.0px;top:1099.0px;width:912.0px;height:57.0px;background:#d7e1f5;"></div>
<div class="t " style="left:1571.0px;top:830.9px;font-size:19px;color:#222;font-weight:400;">Legal &amp; Compliance</div>
<div class="t " style="left:1571.0px;top:888.5px;font-size:19px;color:#222;font-weight:400;">Marketing</div>
<div class="t " style="left:1571.0px;top:946.1px;font-size:19px;color:#222;font-weight:400;">Operations</div>
<div class="t " style="left:1571.0px;top:1003.7px;font-size:19px;color:#222;font-weight:400;">Product Management</div>
<div class="t " style="left:1571.0px;top:1061.3px;font-size:19px;color:#222;font-weight:400;">Sales &amp; Business Development</div>
<div class="t " style="left:1571.0px;top:1118.9px;font-size:19px;color:#333;font-weight:400;">Technology</div>
<svg class="i" style="left:2417.0px;top:1112.5px;width:30.0px;height:30.0px;" viewBox="0 0 24 24"><path fill="#3c4650" d="M9 16.17L4.83 12l-1.42 1.41L9 19 21 7l-1.41-1.41z"/></svg>
<div class="b" style="left:2463.6px;top:826.0px;width:17.4px;height:330.0px;background:#f6f6f6;"></div>
<div class="b" style="left:2468.0px;top:989.0px;width:10.0px;height:157.0px;background:#c2c2c2;border-radius:5px;"></div>
<div class="b" style="left:1552.0px;top:759.8px;width:931.0px;height:66.7px;border:2.5px solid #1565c0;border-radius:5px;background:#fff;"></div>
<div class="t " style="left:1571.3px;top:782.2px;font-size:20px;color:#222;font-weight:400;letter-spacing:0.1px;">Technology</div>
<svg class="i" style="left:2443.0px;top:778.6px;width:28.0px;height:28.0px;" viewBox="0 0 24 24"><path fill="#1565c0" d="M7 10l5 5 5-5z"/></svg>
<div class="b" style="left:1338.0px;top:1264.5px;width:1260.0px;height:1.0px;background:#e6e6e6;"></div>
<div class="b" style="left:1338.0px;top:1262.0px;width:246.0px;height:3.2px;background:#1976d2;"></div>
<div class="t " style="left:1417.7px;top:1228.0px;font-size:17.3px;color:#2a2a2a;font-weight:400;-webkit-text-stroke:0.35px #2a2a2a;">Description</div>
<div class="t " style="left:1664.6px;top:1228.0px;font-size:17.3px;color:#2a2a2a;font-weight:400;-webkit-text-stroke:0.35px #2a2a2a;">Custom Attributes</div>
<div class="t " style="left:1962.0px;top:1228.0px;font-size:17.3px;color:#2a2a2a;font-weight:400;-webkit-text-stroke:0.35px #2a2a2a;">Checklist</div>
<div class="t " style="left:2192.5px;top:1228.0px;font-size:17.3px;color:#2a2a2a;font-weight:400;-webkit-text-stroke:0.35px #2a2a2a;">Comments</div>
<div class="t " style="left:2435.0px;top:1228.0px;font-size:17.3px;color:#2a2a2a;font-weight:400;-webkit-text-stroke:0.35px #2a2a2a;">History</div>
<div class="t " style="left:1357.7px;top:1294.1px;font-size:28.6px;color:#333;font-weight:700;letter-spacing:-0.9px;">Description</div>
<svg class="i" style="left:2511.0px;top:1296.0px;width:30.0px;height:30.0px;" viewBox="0 0 24 24"><path fill="#3c4650" d="M3 17.25V21h3.75L17.81 9.94l-3.75-3.75L3 17.25zM20.71 7.04c.39-.39.39-1.02 0-1.41l-2.34-2.34a.9959.9959 0 0 0-1.41 0l-1.83 1.83 3.75 3.75 1.83-1.83z"/></svg>
<div class="b" style="left:1356.0px;top:1352.0px;width:1195.0px;height:49.0px;background:#f7f7f7;border:1px solid #ebebeb;"></div>
<div class="t " style="left:1367.5px;top:1366.8px;font-size:19.1px;color:#222;font-weight:400;">User not receiving Slack alerts for assigned tickets; needs urgent fix</div>
</body></html>
